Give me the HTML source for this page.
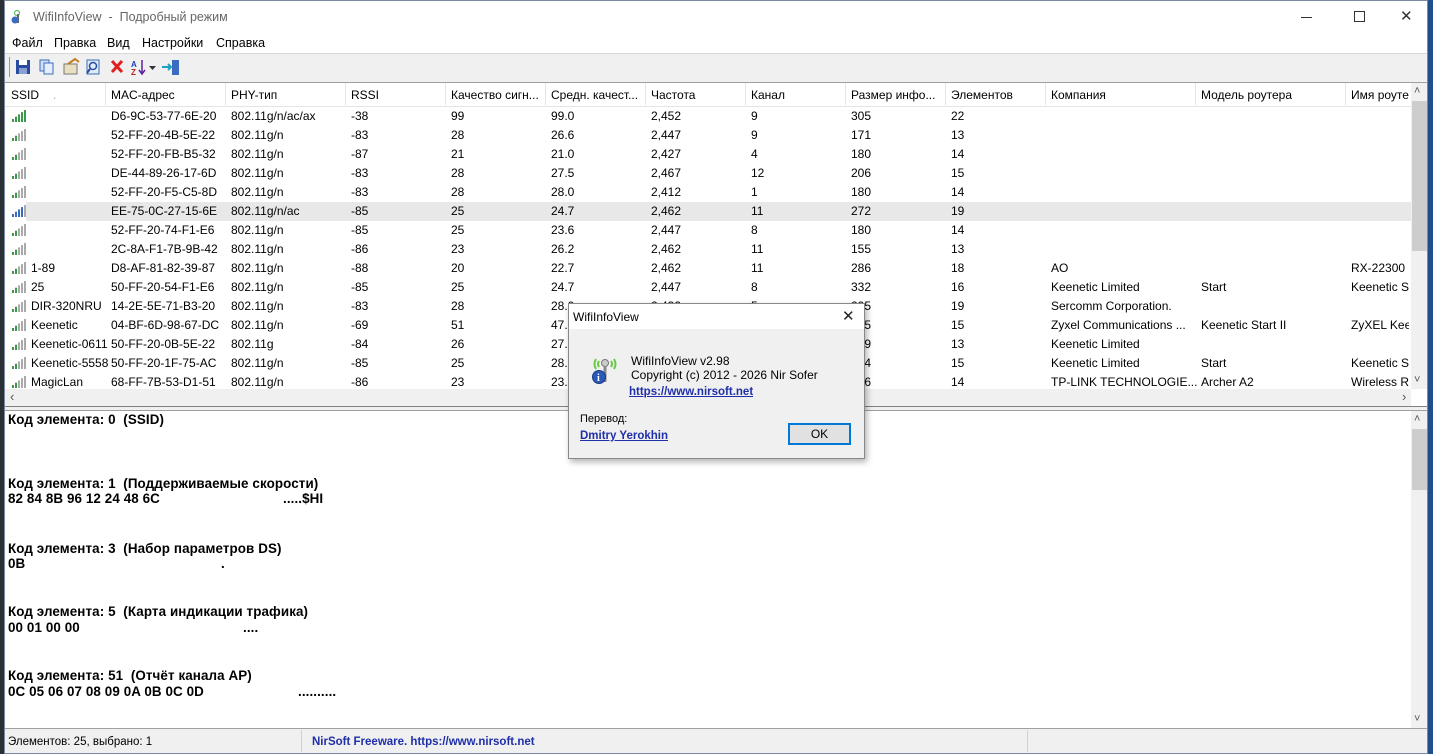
<!DOCTYPE html>
<html><head><meta charset="utf-8">
<style>
*{margin:0;padding:0;box-sizing:border-box}
body{width:1433px;height:754px;overflow:hidden;background:#3a5f8a;font-family:"Liberation Sans",sans-serif;font-size:12px;color:#000;position:relative}
.a{position:absolute;white-space:nowrap}
#win{position:absolute;left:4px;top:0;width:1424px;height:754px;background:#fff;border:1px solid #7a8aa0;overflow:hidden}
.t{position:absolute;white-space:nowrap;line-height:14px}
.b{font-weight:bold;font-size:13.4px;letter-spacing:0.1px}
.m{position:absolute;top:35px;font-size:12.5px}
</style></head><body>
<div style="position:absolute;left:0;top:0;width:4px;height:754px;background:#2b2f36"></div>
<div style="position:absolute;left:1428px;top:0;width:5px;height:754px;background:#1f4e8a"></div>
<div id="win">
<div class="a" style="left:6px;top:6px;width:16px;height:18px">
<svg width="16" height="18"><circle cx="6" cy="6" r="2.5" fill="none" stroke="#6b6" stroke-width="1.2"/><rect x="6" y="7" width="2" height="9" fill="#666"/><circle cx="4" cy="13" r="3.5" fill="#3a6cc0"/></svg></div>
<div class="a" style="left:28px;top:9px;font-size:12.5px;color:#666">WifiInfoView &nbsp;- &nbsp;Подробный режим</div>
<div class="a" style="left:1296px;top:16px;width:11px;height:1px;background:#333"></div>
<div class="a" style="left:1349px;top:10px;width:11px;height:11px;border:1px solid #333"></div>
<div class="a" style="left:1395px;top:6px;font-size:15px;color:#333">✕</div>
<div class="m" style="left:7px">Файл</div>
<div class="m" style="left:49px">Правка</div>
<div class="m" style="left:102px">Вид</div>
<div class="m" style="left:137px">Настройки</div>
<div class="m" style="left:211px">Справка</div>
<div class="a" style="left:0;top:52px;width:1424px;height:29px;background:#f0f0f0;border-top:1px solid #d8d8d8"></div>
<div class="a" style="left:4px;top:56px;width:1px;height:20px;background:#999"></div>
<svg class="a" style="left:8px;top:56px" width="180" height="20">
<rect x="3" y="3" width="14" height="14" fill="#2a4ca0"/><rect x="6" y="3" width="8" height="5" fill="#fff"/><rect x="6" y="11" width="8" height="6" fill="#8aa0d0"/>
<rect x="27" y="3" width="9" height="11" fill="#cfe0f5" stroke="#3a6cc0"/><rect x="31" y="6" width="9" height="11" fill="#e5eefa" stroke="#3a6cc0"/>
<rect x="51" y="7" width="13" height="10" fill="#e8e0c0" stroke="#777"/><path d="M55 7 L62 2 L66 5" stroke="#c08020" stroke-width="2" fill="none"/>
<rect x="74" y="3" width="12" height="14" fill="#e0ecf8" stroke="#3a6cc0"/><circle cx="80" cy="9" r="3.5" fill="none" stroke="#2a4ca0" stroke-width="1.5"/><path d="M77 12 L74 16" stroke="#2a4ca0" stroke-width="2"/>
<path d="M99 4 L109 15 M109 4 L99 15" stroke="#e02020" stroke-width="3"/>
<text x="118" y="10" font-size="8" font-weight="bold" fill="#2040c0" font-family="Liberation Sans">A</text><text x="118" y="18" font-size="8" font-weight="bold" fill="#c02020" font-family="Liberation Sans">Z</text>
<path d="M129 3 V16 M126 13 L129 17 L132 13" stroke="#6020a0" stroke-width="1.5" fill="none"/><path d="M136 9 L143 9 L139.5 13Z" fill="#333"/>
<rect x="159" y="3" width="7" height="15" fill="#3a6cc0"/><path d="M149 10 H158 M155 7 L158 10 L155 13" stroke="#20a0c0" stroke-width="2" fill="none"/>
</svg>
<div class="a" style="left:0;top:81px;width:1424px;height:1px;background:#a0a0a0"></div>
<div class="a" style="left:0;top:82px;width:1406px;height:24px;background:#fff;border-bottom:1px solid #e5e5e5"></div>
<div class="t" style="left:6px;top:87px">SSID</div><div class="t" style="left:48px;top:86px;font-size:9px;color:#777">ˏ</div>
<div class="t" style="left:106px;top:87px">MAC-адрес</div>
<div class="t" style="left:226px;top:87px">PHY-тип</div>
<div class="t" style="left:346px;top:87px">RSSI</div>
<div class="t" style="left:446px;top:87px">Качество сигн...</div>
<div class="t" style="left:546px;top:87px">Средн. качест...</div>
<div class="t" style="left:646px;top:87px">Частота</div>
<div class="t" style="left:746px;top:87px">Канал</div>
<div class="t" style="left:846px;top:87px">Размер инфо...</div>
<div class="t" style="left:946px;top:87px">Элементов</div>
<div class="t" style="left:1046px;top:87px">Компания</div>
<div class="t" style="left:1196px;top:87px">Модель роутера</div>
<div class="t" style="left:1346px;top:87px">Имя роуте</div>
<div class="a" style="left:100px;top:82px;width:1px;height:22px;background:#e5e5e5"></div>
<div class="a" style="left:220px;top:82px;width:1px;height:22px;background:#e5e5e5"></div>
<div class="a" style="left:340px;top:82px;width:1px;height:22px;background:#e5e5e5"></div>
<div class="a" style="left:440px;top:82px;width:1px;height:22px;background:#e5e5e5"></div>
<div class="a" style="left:540px;top:82px;width:1px;height:22px;background:#e5e5e5"></div>
<div class="a" style="left:640px;top:82px;width:1px;height:22px;background:#e5e5e5"></div>
<div class="a" style="left:740px;top:82px;width:1px;height:22px;background:#e5e5e5"></div>
<div class="a" style="left:840px;top:82px;width:1px;height:22px;background:#e5e5e5"></div>
<div class="a" style="left:940px;top:82px;width:1px;height:22px;background:#e5e5e5"></div>
<div class="a" style="left:1040px;top:82px;width:1px;height:22px;background:#e5e5e5"></div>
<div class="a" style="left:1190px;top:82px;width:1px;height:22px;background:#e5e5e5"></div>
<div class="a" style="left:1340px;top:82px;width:1px;height:22px;background:#e5e5e5"></div>
<div class="a" style="left:21px;top:201px;width:1385px;height:19px;background:#e8e8e8"></div>
<div id="rows"></div>
<div class="a" style="left:1406px;top:82px;width:17px;height:306px;background:#f0f0f0"></div>
<div class="a" style="left:1409px;top:84px;font-size:11px;color:#555">˄</div>
<div class="a" style="left:1407px;top:100px;width:15px;height:150px;background:#cdcdcd"></div>
<div class="a" style="left:1409px;top:373px;font-size:11px;color:#555">˅</div>
<div class="a" style="left:0;top:388px;width:1406px;height:17px;background:#f0f0f0"></div>
<div class="a" style="left:5px;top:388px;font-size:13px;color:#555">‹</div>
<div class="a" style="left:1397px;top:388px;font-size:13px;color:#555">›</div>
<div class="a" style="left:0;top:405px;width:1424px;height:5px;background:#f0f0f0;border-top:1px solid #808080;border-bottom:1px solid #a0a0a0"></div>
<div class="t b" style="left:3px;top:412px">Код элемента: 0 &nbsp;(SSID)</div>
<div class="t b" style="left:3px;top:476px">Код элемента: 1 &nbsp;(Поддерживаемые скорости)</div>
<div class="t b" style="left:3px;top:491px">82 84 8B 96 12 24 48 6C</div><div class="t b" style="left:278px;top:491px">.....$HI</div>
<div class="t b" style="left:3px;top:541px">Код элемента: 3 &nbsp;(Набор параметров DS)</div>
<div class="t b" style="left:3px;top:556px">0B</div><div class="t b" style="left:216px;top:556px">.</div>
<div class="t b" style="left:3px;top:604px">Код элемента: 5 &nbsp;(Карта индикации трафика)</div>
<div class="t b" style="left:3px;top:620px">00 01 00 00</div><div class="t b" style="left:238px;top:620px">....</div>
<div class="t b" style="left:3px;top:668px">Код элемента: 51 &nbsp;(Отчёт канала AP)</div>
<div class="t b" style="left:3px;top:684px">0C 05 06 07 08 09 0A 0B 0C 0D</div><div class="t b" style="left:293px;top:684px">..........</div>
<div class="a" style="left:1406px;top:410px;width:17px;height:318px;background:#f0f0f0"></div>
<div class="a" style="left:1409px;top:412px;font-size:11px;color:#555">˄</div>
<div class="a" style="left:1407px;top:428px;width:15px;height:61px;background:#cdcdcd"></div>
<div class="a" style="left:1409px;top:712px;font-size:11px;color:#555">˅</div>
<div class="a" style="left:0;top:727px;width:1424px;height:27px;background:#f0f0f0;border-top:1px solid #a0a0a0"></div>
<div class="a" style="left:3px;top:735px;font-size:11.5px">Элементов: 25, выбрано: 1</div>
<div class="a" style="left:296px;top:729px;width:1px;height:22px;background:#d0d0d0"></div>
<div class="a" style="left:1022px;top:729px;width:1px;height:22px;background:#d0d0d0"></div>
<div class="a" style="left:307px;top:735px;font-size:11.5px;font-weight:bold;color:#1f2fa8">NirSoft Freeware. https://www.nirsoft.net</div>
<div class="a" style="left:563px;top:302px;width:297px;height:156px;background:#f0f0f0;border:1px solid #888;box-shadow:2px 3px 6px rgba(0,0,0,.3)">
<div class="a" style="left:0;top:0;width:295px;height:25px;background:#fff"></div>
<div class="a" style="left:4px;top:6px;font-size:12px">WifiInfoView</div>
<div class="a" style="left:273px;top:3px;font-size:15px;color:#222">✕</div>
<svg class="a" style="left:21px;top:47px" width="36" height="36"><path d="M6 8 Q3 13 6 18 M9 10 Q7 13 9 16 M24 8 Q27 13 24 18 M21 10 Q23 13 21 16" stroke="#6c4" stroke-width="2" fill="none"/><circle cx="15" cy="12" r="3.5" fill="#ccc" stroke="#777"/><rect x="13.5" y="15" width="3" height="16" fill="#888"/><circle cx="9" cy="26" r="6.5" fill="#2a5ab8" stroke="#1a3a80"/><text x="7" y="30" font-size="10" font-weight="bold" fill="#fff" font-family="Liberation Serif">i</text></svg>
<div class="a" style="left:62px;top:50px;font-size:12px">WifiInfoView v2.98</div>
<div class="a" style="left:62px;top:64px;font-size:12px">Copyright (c) 2012 - 2026 Nir Sofer</div>
<div class="a" style="left:60px;top:82px;font-size:11.5px;font-weight:bold;color:#1f2fa8;text-decoration:underline">https://www.nirsoft.net</div>
<div class="a" style="left:11px;top:109px;font-size:11px">Перевод:</div>
<div class="a" style="left:11px;top:126px;font-size:11.5px;font-weight:bold;color:#1f2fa8;text-decoration:underline">Dmitry Yerokhin</div>
<div class="a" style="left:219px;top:119px;width:63px;height:22px;background:#e1e1e1;border:2px solid #0078d7;text-align:center;line-height:18px;font-size:12px">OK</div>
</div>
</div>
<script>
var R=[
["","D6-9C-53-77-6E-20","802.11g/n/ac/ax","-38","99","99.0","2,452","9","305","22","","",""],
["","52-FF-20-4B-5E-22","802.11g/n","-83","28","26.6","2,447","9","171","13","","",""],
["","52-FF-20-FB-B5-32","802.11g/n","-87","21","21.0","2,427","4","180","14","","",""],
["","DE-44-89-26-17-6D","802.11g/n","-83","28","27.5","2,467","12","206","15","","",""],
["","52-FF-20-F5-C5-8D","802.11g/n","-83","28","28.0","2,412","1","180","14","","",""],
["","EE-75-0C-27-15-6E","802.11g/n/ac","-85","25","24.7","2,462","11","272","19","","",""],
["","52-FF-20-74-F1-E6","802.11g/n","-85","25","23.6","2,447","8","180","14","","",""],
["","2C-8A-F1-7B-9B-42","802.11g/n","-86","23","26.2","2,462","11","155","13","","",""],
["1-89","D8-AF-81-82-39-87","802.11g/n","-88","20","22.7","2,462","11","286","18","AO","","RX-22300"],
["25","50-FF-20-54-F1-E6","802.11g/n","-85","25","24.7","2,447","8","332","16","Keenetic Limited","Start","Keenetic St"],
["DIR-320NRU","14-2E-5E-71-B3-20","802.11g/n","-83","28","28.0","2,432","5","295","19","Sercomm Corporation.","",""],
["Keenetic","04-BF-6D-98-67-DC","802.11g/n","-69","51","47.0","2,412","1","275","15","Zyxel Communications ...","Keenetic Start II","ZyXEL Keer"],
["Keenetic-0611","50-FF-20-0B-5E-22","802.11g","-84","26","27.6","2,412","1","279","13","Keenetic Limited","",""],
["Keenetic-5558","50-FF-20-1F-75-AC","802.11g/n","-85","25","28.2","2,412","1","274","15","Keenetic Limited","Start","Keenetic St"],
["MagicLan","68-FF-7B-53-D1-51","802.11g/n","-86","23","23.9","2,412","1","276","14","TP-LINK TECHNOLOGIE...","Archer A2","Wireless Ro"]];
var X=[26,106,226,346,446,546,646,746,846,946,1046,1196,1346],h="";
R.forEach(function(r,i){var y=106+i*19;
var g=i==0?5:(i==5?4:2);
h+='<svg class="a" style="left:6px;top:'+(y+3)+'px" width="16" height="13">';
for(var k=0;k<5;k++){var hh=3+k*2.3;h+='<rect x="'+(1+k*3)+'" y="'+(12-hh)+'" width="2" height="'+hh+'" fill="'+(k<g?(i==5?'#3a6cc0':'#3a9a4a'):'#aaa')+'"/>';}
h+='</svg>';
r.forEach(function(c,j){if(c){var x=X[j];h+='<div class="t" style="left:'+x+'px;top:'+(y+2)+'px;'+(j==12?'width:58px;overflow:hidden':(j==10?'width:148px;overflow:hidden':''))+'">'+c+'</div>';}});});
document.getElementById('rows').outerHTML=h;
</script>
</body></html>
